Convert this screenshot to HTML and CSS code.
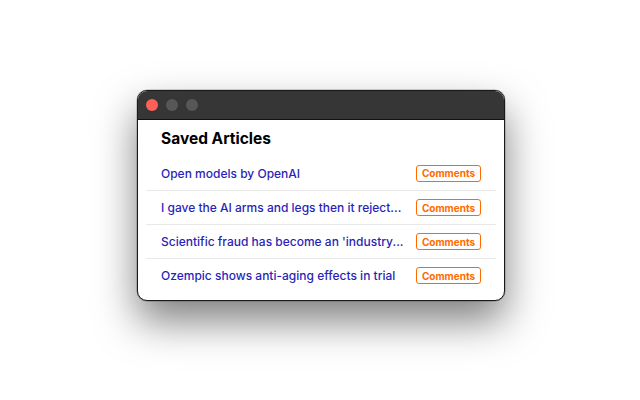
FILE: index.html
```html
<!DOCTYPE html>
<html>
<head>
<meta charset="utf-8">
<link rel="stylesheet" href="styles.css">
</head>
<body>
<div class="stage">
  <div class="window">
    <div class="titlebar">
      <span class="light red"></span>
      <span class="light grey"></span>
      <span class="light grey"></span>
    </div>
    <div class="content">
      <h1 class="heading">Saved Articles</h1>
      <ul class="list">
        <li class="row"><a class="title">Open models by OpenAI</a><span class="badge">Comments</span></li>
        <li class="row"><a class="title">I gave the AI arms and legs then it reject...</a><span class="badge">Comments</span></li>
        <li class="row"><a class="title">Scientific fraud has become an 'industry...</a><span class="badge">Comments</span></li>
        <li class="row"><a class="title">Ozempic shows anti-aging effects in trial</a><span class="badge">Comments</span></li>
      </ul>
    </div>
  </div>
</div>
</body>
</html>
```
FILE: styles.css
```css
* { box-sizing: border-box; }
html, body { margin: 0; padding: 0; background: #fff; }
body { font-family: Inter, "Noto Sans", sans-serif; }
.stage {
  width: 640px;
  height: 400px;
  padding: 90px 0 0 137px;
}
.window {
  width: 368px;
  height: 211px;
  border: 1px solid #1a1a1a;
  border-radius: 10px;
  background: #fff;
  overflow: hidden;
  box-shadow: 0 20px 40px rgba(0,0,0,0.5), 0 0 0 0.5px rgba(0,0,0,0.3);
  display: flex;
  flex-direction: column;
}
.titlebar {
  height: 29px;
  background: #363636;
  border-bottom: 1px solid #111;
  display: flex;
  align-items: center;
  gap: 8px;
  padding-left: 8px;
  flex: none;
}
.light {
  width: 12px;
  height: 12px;
  border-radius: 50%;
  background: #575757;
}
.light.red { background: #fe5f57; }
.content {
  padding: 0 8px;
}
.heading {
  margin: 0;
  height: 36px;
  padding: 10px 0 0 15px;
  font-size: 15.5px;
  font-weight: 700;
  color: #000;
  line-height: 18px;
}
.list {
  list-style: none;
  margin: 0;
  padding: 0;
}
.row {
  height: 34px;
  display: flex;
  align-items: center;
  justify-content: space-between;
  padding: 0 15px;
  border-top: 1px solid #e8e8e8;
}
.row:first-child { border-top: none; }
.title {
  color: #2a1fb8;
  font-size: 12px;
  font-weight: 500;
  white-space: nowrap;
}
.badge {
  flex: none;
  width: 65px;
  height: 17px;
  border: 1px solid #ff6a00;
  border-radius: 3px;
  color: #ff6a00;
  font-size: 10px;
  font-weight: 700;
  display: flex;
  align-items: center;
  justify-content: center;
}
```
